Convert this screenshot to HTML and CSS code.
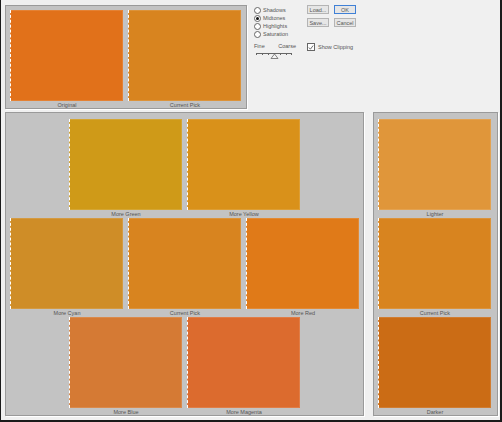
FILE: index.html
```html
<!DOCTYPE html>
<html>
  <head>
    <title>Variations</title>
    <link rel="stylesheet" href="styles.css">
  </head>
  <body>
    <div class="window">
      <div class="top">
        <div class="panel panel-top">
          <div class="cell">
            <div class="swatch" style="background:#e1711a"></div>
            <div class="label">Original</div>
          </div>
          <div class="cell">
            <div class="swatch" style="background:#d8841f"></div>
            <div class="label">Current Pick</div>
          </div>
        </div>

        <div class="controls">
          <div class="left">
            <div class="radio"><span class="dot"></span>Shadows</div>
            <div class="radio"><span class="dot on"></span>Midtones</div>
            <div class="radio"><span class="dot"></span>Highlights</div>
            <div class="radio"><span class="dot"></span>Saturation</div>

            <div class="slider">
              <div class="ends"><span>Fine</span><span>Coarse</span></div>
              <svg width="40" height="10" viewBox="0 0 40 10">
                <line x1="2" y1="3.5" x2="38" y2="3.5" stroke="#666" stroke-width="1"/>
                <line x1="2.5" y1="3" x2="2.5" y2="5" stroke="#666"/>
                <line x1="8.5" y1="3" x2="8.5" y2="5" stroke="#666"/>
                <line x1="14.5" y1="3" x2="14.5" y2="5" stroke="#666"/>
                <line x1="26.5" y1="3" x2="26.5" y2="5" stroke="#666"/>
                <line x1="32.5" y1="3" x2="32.5" y2="5" stroke="#666"/>
                <line x1="37.5" y1="3" x2="37.5" y2="5" stroke="#666"/>
                <polygon points="20.5,4 17,8.5 24,8.5" fill="#f4f4f4" stroke="#666" stroke-width="0.8"/>
              </svg>
            </div>
          </div>

          <div class="right">
            <div class="buttons">
              <div class="btn">Load...</div>
              <div class="btn ok">OK</div>
              <div class="btn">Save...</div>
              <div class="btn">Cancel</div>
            </div>
            <div class="check">
              <span class="box">
                <svg width="7" height="7" viewBox="0 0 7 7"><polyline points="1,3.5 2.8,5.5 6,1.2" fill="none" stroke="#444" stroke-width="0.9"/></svg>
              </span>Show Clipping
            </div>
          </div>
        </div>
      </div>

      <div class="bottom">
        <div class="panel panel-main">
          <div class="row">
            <div class="cell">
              <div class="swatch" style="background:#cf9a18"></div>
              <div class="label">More Green</div>
            </div>
            <div class="cell">
              <div class="swatch" style="background:#d9911a"></div>
              <div class="label">More Yellow</div>
            </div>
          </div>
          <div class="row">
            <div class="cell">
              <div class="swatch" style="background:#cf8d27"></div>
              <div class="label">More Cyan</div>
            </div>
            <div class="cell">
              <div class="swatch" style="background:#d8841f"></div>
              <div class="label">Current Pick</div>
            </div>
            <div class="cell">
              <div class="swatch" style="background:#e07a18"></div>
              <div class="label">More Red</div>
            </div>
          </div>
          <div class="row">
            <div class="cell">
              <div class="swatch" style="background:#d57a34"></div>
              <div class="label">More Blue</div>
            </div>
            <div class="cell">
              <div class="swatch" style="background:#dc6b2e"></div>
              <div class="label">More Magenta</div>
            </div>
          </div>
        </div>

        <div class="panel panel-side">
          <div class="cell">
            <div class="swatch" style="background:#e0963a"></div>
            <div class="label">Lighter</div>
          </div>
          <div class="cell">
            <div class="swatch" style="background:#d8841f"></div>
            <div class="label">Current Pick</div>
          </div>
          <div class="cell">
            <div class="swatch" style="background:#cb6c15"></div>
            <div class="label">Darker</div>
          </div>
        </div>
      </div>
    </div>
  </body>
</html>
```

FILE: styles.css
```css
body{
  margin: 0;
  background: #f0f0f0;
  font-family: "Liberation Sans", Arial, sans-serif;
  font-size: 5.5px;
  color: #555;
}

.window{
  width: 502px;
  height: 422px;
  box-sizing: border-box;
  border-left: 1px solid #1a1a1a;
  border-right: 2px solid #1a1a1a;
  border-bottom: 2px solid #1a1a1a;
  background: #f0f0f0;
}

/**** panels ****/
.panel{
  background: #c3c3c3;
  border: 1px solid #9a9a9a;
  box-shadow: 1px 1px 0 #fff;
  box-sizing: border-box;
}

.cell{
  width: 112px;
}
.swatch{
  height: 91px;
  box-sizing: border-box;
  border-left: 1px dashed #fff;
  margin-left: -1px;
  width: 113px;
  outline: 1px solid rgba(255,255,255,0.12);
  outline-offset: -1px;
}
.label{
  height: 8px;
  line-height: 8px;
  text-align: center;
  color: #555;
}

/**** top ****/
.top{
  display: flex;
  padding: 5px 0 0 4px;
}
.panel-top{
  display: flex;
  gap: 6px;
  width: 242px;
  height: 104px;
  padding: 4px 0 0 5px;
}

.controls{
  display: flex;
  margin-left: 7px;
}
.left{
  width: 53px;
}
.radio{
  display: flex;
  align-items: center;
  height: 8px;
  gap: 2px;
}
.radio:first-child{
  margin-top: 1px;
}
.dot{
  width: 5px;
  height: 5px;
  border: 1px solid #666;
  border-radius: 50%;
  background: #fff;
  position: relative;
}
.dot.on::after{
  content: "";
  position: absolute;
  left: 1px;
  top: 1px;
  width: 3px;
  height: 3px;
  border-radius: 50%;
  background: #111;
}

.slider{
  margin-top: 5px;
  width: 42px;
}
.ends{
  display: flex;
  justify-content: space-between;
  height: 7px;
  line-height: 7px;
}
.slider svg{
  display: block;
}

.buttons{
  display: grid;
  grid-template-columns: 22px 22px;
  column-gap: 5px;
  row-gap: 4px;
}
.btn{
  height: 9px;
  line-height: 8px;
  box-sizing: border-box;
  border: 1px solid #b4b4b4;
  background: #e6e6e6;
  text-align: center;
  color: #555;
}
.btn.ok{
  border-color: #3f80d6;
}
.check{
  display: flex;
  align-items: center;
  gap: 3px;
  margin-top: 16px;
}
.box{
  width: 8px;
  height: 8px;
  box-sizing: border-box;
  border: 1px solid #666;
  background: #fff;
  display: flex;
  align-items: center;
  justify-content: center;
}

/**** bottom ****/
.bottom{
  display: flex;
  gap: 9px;
  padding: 3px 0 0 4px;
}
.panel-main{
  width: 359px;
  height: 304px;
  padding: 6px 0 0 5px;
}
.row{
  display: flex;
  justify-content: center;
  gap: 6px;
  width: 348px;
}
.panel-side{
  width: 125px;
  height: 304px;
  padding: 6px 0 0 5px;
}
```
